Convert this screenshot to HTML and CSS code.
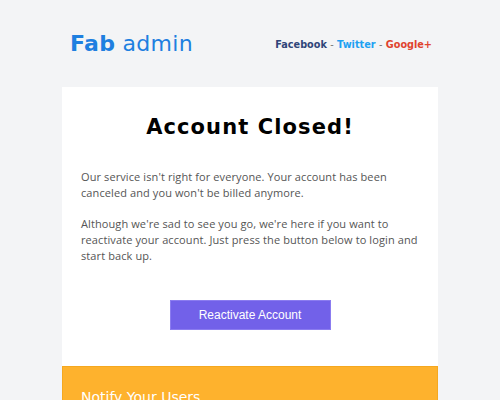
FILE: index.html
```html
<!DOCTYPE html>
<html>
<head>
<meta charset="utf-8">
<link rel="stylesheet" href="styles.css">
</head>
<body>
<div class="wrap">
  <header class="top">
    <div class="logo"><b>Fab</b> admin</div>
    <nav class="social">
      <a class="fb">Facebook</a> <span class="sep">-</span> <a class="tw">Twitter</a> <span class="sep">-</span> <a class="gp">Google+</a>
    </nav>
  </header>
  <main class="card">
    <h1 class="title">Account Closed!</h1>
    <p class="text">Our service isn't right for everyone. Your account has been canceled and you won't be billed anymore.</p>
    <p class="text">Although we're sad to see you go, we're here if you want to reactivate your account. Just press the button below to login and start back up.</p>
    <div class="actions"><button class="btn">Reactivate Account</button></div>
  </main>
  <section class="notify">
    <h2 class="notify-title">Notify Your Users</h2>
  </section>
</div>
</body>
</html>
```
FILE: styles.css
```css
html, body {
  margin: 0;
  padding: 0;
  background: #f3f4f6;
  font-family: "DejaVu Sans", sans-serif;
  overflow: hidden;
}
.wrap {
  width: 376px;
  margin: 0 auto;
}
.top {
  height: 87px;
  display: flex;
  align-items: center;
  justify-content: space-between;
  padding: 0 6px 0 8px;
  box-sizing: border-box;
}
.logo {
  font-size: 22px;
  color: #1e7fe0;
  letter-spacing: 0.3px;
  margin-top: -1px;
}
.logo b { font-weight: 700; }
.social {
  font-size: 9.7px;
  font-weight: 700;
  margin-top: 1px;
}
.social a { text-decoration: none; }
.fb { color: #2f4579; }
.tw { color: #1da1f2; }
.gp { color: #e0432e; }
.sep { color: #777; font-weight: 400; }
.card {
  background: #fff;
  padding: 27px 19px 36px;
}
.title {
  margin: 0 0 29px;
  text-align: center;
  font-size: 21px;
  font-weight: 700;
  letter-spacing: 1.1px;
  color: #000;
  line-height: 26px;
}
.text {
  margin: 0 0 15px;
  font-family: "Open Sans", sans-serif;
  font-size: 11px;
  line-height: 16px;
  color: #555;
  letter-spacing: 0.1px;
}
.actions {
  display: flex;
  justify-content: center;
  padding-top: 21px;
}
.btn {
  width: 161px;
  height: 30px;
  background: #7261e9;
  border: 1px solid #8b7cf0;
  color: #fff;
  font-family: "Liberation Sans", Arial, sans-serif;
  font-size: 12px;
  padding: 0;
}
.notify {
  background: #feb22d;
  border: 1px solid #f5a81f;
  padding: 22px 18px 20px;
}
.notify-title {
  margin: 0;
  color: #fff;
  font-size: 14px;
  font-weight: 400;
}
```
